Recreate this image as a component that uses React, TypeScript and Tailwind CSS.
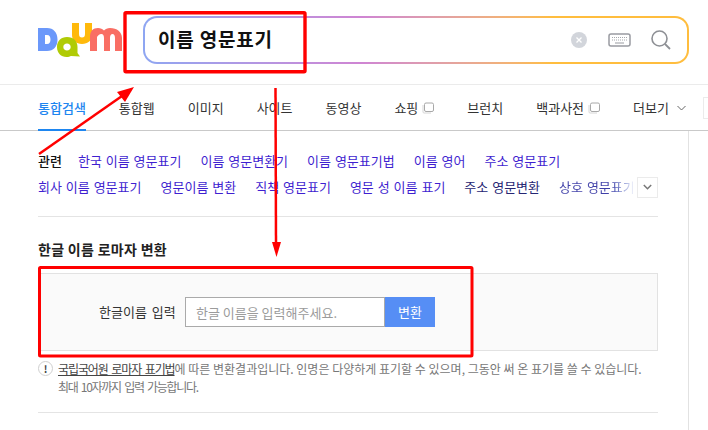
const FONT = "font-['Noto_Sans_CJK_KR','Noto_Sans',sans-serif]";

const navItems = [
  { label: "통합웹" },
  { label: "이미지" },
  { label: "사이트" },
  { label: "동영상" },
  { label: "쇼핑", ext: true },
  { label: "브런치" },
  { label: "백과사전", ext: true },
];

const relatedOne = ["한국 이름 영문표기", "이름 영문변환기", "이름 영문표기법", "이름 영어", "주소 영문표기"];
const relatedTwo = ["회사 이름 영문표기", "영문이름 변환", "직책 영문표기", "영문 성 이름 표기"];

function Logo() {
  return (
    <svg width="84" height="34" viewBox="0 0 84 34" className="shrink-0">
      <path d="M0 5h9c6.500 0 10.500 4.500 10.500 11.500S15.500 28 9 28H0z M7 12v9h2c2.500 0 3.500-2 3.500-4.500S11.500 12 9 12z" fill="#6b98fa" fillRule="evenodd" />
      <path d="M34 0h7v11c0 2.500 1 3.500 3 3.500s3-1 3-3.500V0h7v12c0 5.500-4 9-10 9s-10-3.500-10-9z" fill="#ffb90b" />
      <path d="M29 14c-6 0-10 4-10 10s4 10 9.500 10c2 0 3.500-.5 4.500-1l9 .5-2.500-3.500V24c0-6-4-10-10.500-10z M29 20.500c2 0 3.700 1.500 3.700 3.500s-1.700 3.500-3.700 3.500-3.700-1.500-3.700-3.500 1.700-3.500 3.700-3.500z" fill="#b0cb05" fillRule="evenodd" />
      <path d="M52 28V14C52 8 55 5 60 5c2.600 0 4.600 1 6 2.600C67.400 6 69.400 5 72 5c7 0 12 4 12 10v13h-7V15c0-2.500-1-4-2.500-4S72 12.500 72 15v13h-6V15c0-2.500-1-4-2.500-4S59 12.500 59 15v13z" fill="#f96e64" />
    </svg>
  );
}

function ExtIcon() {
  return (
    <svg width="12" height="12" viewBox="0 0 12 12" fill="none" className="shrink-0">
      <path d="M1 3v7c0 .6.400 1 1 1h7" stroke="#d6d6d6" />
      <rect x="2.500" y="1" width="9" height="8.500" rx="1.500" stroke="#a8a8a8" />
    </svg>
  );
}

function Annotations() {
  return (
    <svg width="708" height="430" className="absolute top-0 left-0 pointer-events-none">
      <rect x="125" y="12.800" width="180" height="59" rx="1" fill="none" stroke="#f00" strokeWidth="3.400" />
      <rect x="39.500" y="267.500" width="432.500" height="88.500" rx="1" fill="none" stroke="#f00" strokeWidth="3" />
      <line x1="39" y1="154" x2="122" y2="96" stroke="#f00" strokeWidth="2.500" />
      <polygon points="134,87 117,92 125,102" fill="#f00" />
      <line x1="275.500" y1="88" x2="276" y2="245" stroke="#f00" strokeWidth="2.500" />
      <polygon points="272,242 281,242 276.500,257" fill="#f00" />
    </svg>
  );
}

export default function App() {
  return (
    <div className={`relative h-[430px] w-[708px] overflow-hidden bg-white ${FONT}`}>
      <header className="flex h-[85px] items-center border-b border-[#ebebeb] pb-[5px] pl-[38px]">
        <div className="w-[105px]">
          <Logo />
        </div>
        <div className="h-[48px] w-[546px] rounded-[14px] bg-gradient-to-r from-[#8ea6f2] via-[#cf85d3] via-40% to-[#ffbd3e] to-75% p-[2px]">
          <div className="flex h-full items-center rounded-[12px] bg-white pr-[16px] pl-[13px]">
            <span className="flex-1 text-[19px] font-bold tracking-[0.8px] text-[#111]">이름 영문표기</span>
            <span className="mr-[21px] flex h-[16px] w-[16px] items-center justify-center rounded-full bg-[#d2d5db] text-white">
              <svg width="8" height="8" viewBox="0 0 8 8">
                <path d="M1.500 1.500l5 5m0-5l-5 5" stroke="#fff" strokeWidth="1.300" />
              </svg>
            </span>
            <svg width="23" height="14" viewBox="0 0 23 14" fill="none" className="mr-[20px]">
              <rect x="1" y="1" width="21" height="12" rx="2" stroke="#999ba1" strokeWidth="1.500" />
              <path d="M4 4.500h15M4 7h15" stroke="#a6a8ad" strokeDasharray="1 1" />
              <path d="M7 10h9" stroke="#999ba1" />
            </svg>
            <svg width="20" height="20" viewBox="0 0 20 20" fill="none">
              <circle cx="8.500" cy="8.500" r="7.500" stroke="#8e9095" strokeWidth="1.600" />
              <path d="M14 14l5 5" stroke="#8e9095" strokeWidth="1.800" />
            </svg>
          </div>
        </div>
      </header>

      <nav className="flex h-[46px] items-center gap-[33px] border-b border-[#c9c9c9] pl-[38px] text-[13px] whitespace-nowrap text-[#333]">
        <span className="relative flex h-full shrink-0 items-center font-medium text-[#1e86f0]">
          통합검색
          <span className="absolute right-0 -bottom-px left-0 h-[2px] bg-[#1e86f0]" />
        </span>
        {navItems.map((item) => (
          <span key={item.label} className="flex shrink-0 items-center gap-[4px]">
            {item.label}
            {item.ext && <ExtIcon />}
          </span>
        ))}
        <span className="flex shrink-0 items-center gap-[8px]">
          더보기
          <svg width="9" height="6" viewBox="0 0 9 6" fill="none">
            <path d="M.5 1l4 4 4-4" stroke="#666" />
          </svg>
        </span>
        <span className="-ml-[16px] h-[22px] w-[20px] shrink-0 border border-[#ebebeb]" />
      </nav>

      <main className="h-[300px] w-[689px] border-r border-[#e2e2e2] pr-[30px] pl-[38px]">
        <section className="h-[86px] border-b border-[#e4e4e4] pt-[20px] text-[13px] [word-spacing:1px] text-[#3f1fd0]">
          <div className="flex h-[20px] items-center gap-[19px] whitespace-nowrap">
            <span className="-mr-[3px] font-medium text-[#111]">관련</span>
            {relatedOne.map((text) => (
              <span key={text}>{text}</span>
            ))}
          </div>
          <div className="mt-[5px] flex h-[22px] items-center whitespace-nowrap">
            <div className="flex w-[599px] items-center gap-[19px] overflow-hidden">
              {relatedTwo.map((text) => (
                <span key={text}>{text}</span>
              ))}
              <span className="text-[#262673]">주소 영문변환</span>
              <span className="bg-gradient-to-r from-[#3f3fa8] from-70% to-[#ffffff] bg-clip-text text-transparent">상호 영문표기</span>
            </div>
            <span className="flex h-[21px] w-[21px] shrink-0 items-center justify-center border border-[#ebebeb]">
              <svg width="9" height="6" viewBox="0 0 9 6" fill="none">
                <path d="M.8 1l3.700 3.700L8.200 1" stroke="#777" strokeWidth="1.500" />
              </svg>
            </span>
          </div>
        </section>

        <h2 className="mt-[22px] h-[20px] text-[14px] leading-[20px] font-semibold tracking-[0.3px] text-[#222]">한글 이름 로마자 변환</h2>
        <div className="mt-[14px] flex h-[78px] items-center border border-[#e2e2e2] bg-[#fafafa] pl-[60px]">
          <label className="w-[86px] text-[13px] [word-spacing:2px] text-[#333]">한글이름 입력</label>
          <div className="flex h-[30px]">
            <input
              readOnly
              placeholder="한글 이름을 입력해주세요."
              className="h-[30px] w-[200px] border border-[#aaaaaa] bg-white px-[10px] text-[13px] outline-none placeholder:text-[#9b9b9b]"
            />
            <button className="h-[30px] w-[50px] bg-[#568ef5] text-[13px] text-white">변환</button>
          </div>
        </div>

        <div className="flex h-[62px] gap-[5px] border-b border-[#e4e4e4] pt-[9px] text-[12px] leading-[18px] text-[#777]">
          <span className="mt-[1px] flex h-[15px] w-[15px] shrink-0 items-center justify-center rounded-full border border-[#cfcfcf] text-[10px] leading-none font-bold text-[#444]">
            !
          </span>
          <p className="whitespace-nowrap">
            <span className="tracking-[-1.1px] [word-spacing:2px] text-[#444] underline">국립국어원 로마자 표기법</span>에 따른 변환결과입니다. 인명은 다양하게 표기할 수 있으며, 그동안 써 온 표기를 쓸 수 있습니다.
            <br />
            <span className="tracking-[-1.3px] [word-spacing:2px]">최대 10자까지 입력 가능합니다.</span>
          </p>
        </div>
      </main>

      <Annotations />
    </div>
  );
}
